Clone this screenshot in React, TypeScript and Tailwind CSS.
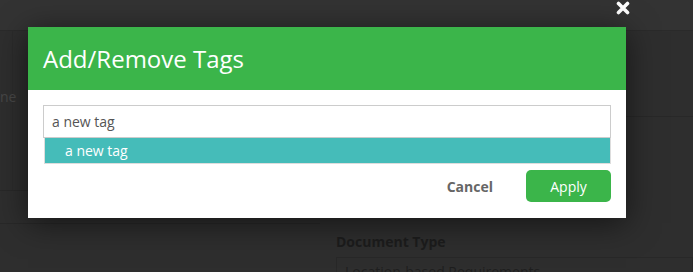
import React from "react";

export default function App() {
  return (
    <div className="relative w-[693px] h-[272px] overflow-hidden bg-[#2e2e2e] font-['Open_Sans',sans-serif]">
      {/* Dimmed page behind the modal */}
      <div className="h-[31px] bg-[#333333] border-b border-[#2a2a2a]" />
      <div className="flex h-[241px]">
        <div className="w-[320px] flex flex-col">
          <div className="h-[160px] shrink-0 border-b border-[#282828] flex">
            <div className="w-[13px] border-r border-[#2b2b2b]" />
            <div className="pt-[55px] -ml-[13px] text-[14px] text-[#474747]">ne</div>
          </div>
          <div className="h-[33px] shrink-0 border-b border-[#282828]" />
        </div>
        <div className="flex-1 flex flex-col">
          <div className="h-[86px] shrink-0 border-b border-[#282828]" />
          <div className="h-[107px] shrink-0" />
          <div className="shrink-0 pl-[16px] pt-[8px]">
            <div className="text-[14px] font-bold text-[#1c1c1c] leading-[20px]">Document Type</div>
            <div className="mt-[5px] h-[30px] border border-[#282828] pl-[8px] pt-[4px] text-[14px] text-[#1e1e1e] leading-[20px]">
              Location-based Requirements
            </div>
          </div>
        </div>
      </div>

      {/* Close icon */}
      <svg
        className="absolute left-[616px] top-[1px]"
        width="14"
        height="14"
        viewBox="0 0 14 14"
      >
        <path d="M2.5 2.5 L11.5 11.5 M11.5 2.5 L2.5 11.5" stroke="#ffffff" strokeWidth="3.6" strokeLinecap="round" />
      </svg>

      {/* Modal */}
      <div className="absolute left-[28px] top-[27px] w-[598px] h-[191px] bg-white shadow-[0_5px_30px_rgba(0,0,0,0.55)]">
        <div className="h-[63px] bg-[#3bb54a] flex items-center px-[15px]">
          <h2 className="text-[24px] text-white leading-none font-normal">Add/Remove Tags</h2>
        </div>
        <div className="px-[15px] pt-[15px]">
          <div className="h-[33px] border border-[#cccccc] flex items-center pl-[8px] text-[14px] text-[#555555]">
            a new tag
          </div>
          <div className="ml-[1px] h-[26px] bg-[#45bcb9] border border-[#dddddd] border-t-0 flex items-center pl-[20px] text-[14px] text-white">
            a new tag
          </div>
          <div className="flex justify-end items-center mt-[6px]">
            <button className="text-[14px] font-bold text-[#666666] mr-[33px]">Cancel</button>
            <button className="w-[85px] h-[32px] rounded-[5px] bg-[#3bb54a] text-white text-[14px]">Apply</button>
          </div>
        </div>
      </div>
    </div>
  );
}
